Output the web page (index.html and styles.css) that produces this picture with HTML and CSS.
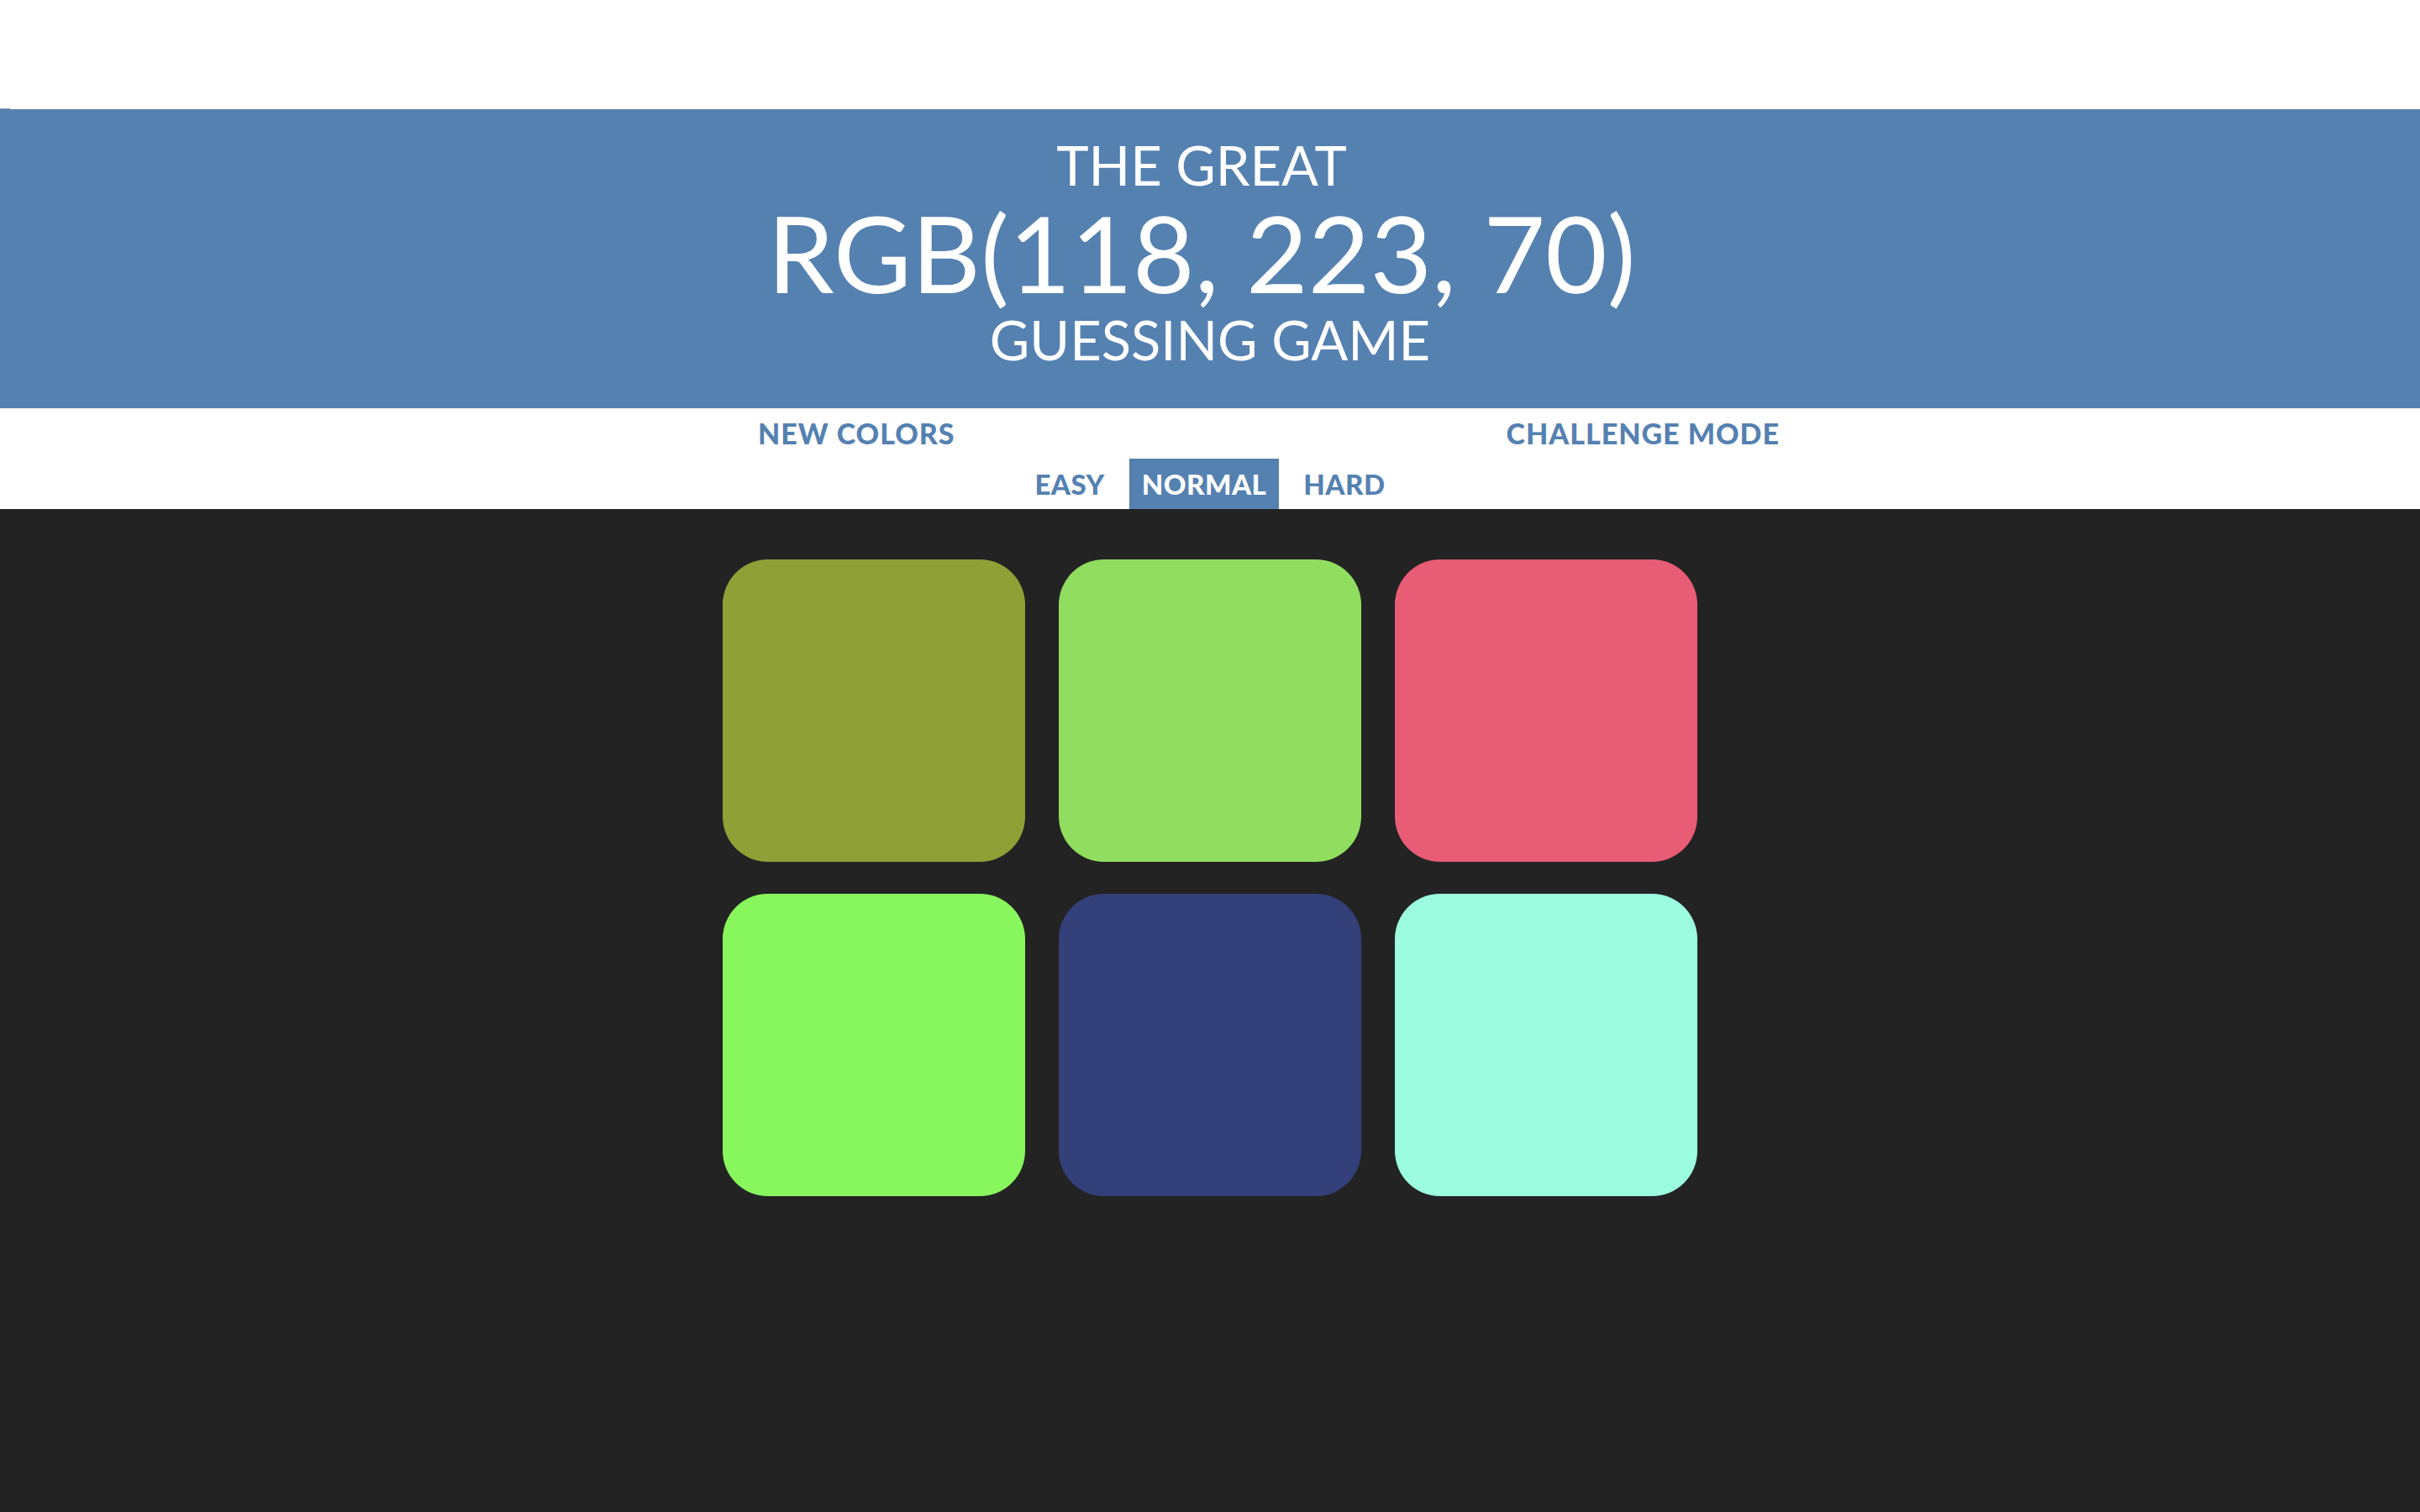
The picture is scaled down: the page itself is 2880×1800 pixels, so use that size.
FILE: index.html
```html
<!DOCTYPE html>
<html lang="en">
<head>
<meta charset="utf-8">
<title>Color Game</title>
<link rel="stylesheet" href="styles.css">
</head>
<body>
<div class="topspace"><span class="mark"></span></div>
<h1 class="header">
  <span class="line small shifted">THE GREAT</span>
  <span class="line big shifted">RGB(118, 223, 70)</span>
  <span class="line small">GUESSING GAME</span>
</h1>
<div class="stripe">
  <div class="row row-main">
    <button class="btn btn-main">NEW COLORS</button>
    <span class="message"></span>
    <button class="btn btn-main">CHALLENGE MODE</button>
  </div>
  <div class="row row-modes">
    <button class="btn">EASY</button>
    <button class="btn selected">NORMAL</button>
    <button class="btn">HARD</button>
  </div>
</div>
<div class="container">
  <div class="square sq1"></div>
  <div class="square sq2"></div>
  <div class="square sq3"></div>
  <div class="square sq4"></div>
  <div class="square sq5"></div>
  <div class="square sq6"></div>
</div>
</body>
</html>
```
FILE: styles.css
```css
html, body {
  margin: 0;
  padding: 0;
}
body {
  background: #232323;
  font-family: Lato, "Open Sans", "Liberation Sans", sans-serif;
  min-height: 1800px;
}
.topspace {
  height: 130px;
  background: #ffffff;
  display: flex;
  align-items: flex-end;
}
.mark {
  display: block;
  width: 12px;
  height: 1px;
  background: #8a9cb4;
}
.header {
  margin: 0;
  background: #5581b1;
  color: #ffffff;
  font-weight: 400;
  text-align: center;
  padding: 26px 0 42px;
}
.line {
  display: block;
}
.shifted {
  padding-right: 20px;
}
.small {
  font-size: 65px;
  line-height: 80px;
}
.big {
  font-size: 127px;
  line-height: 128px;
}
.stripe {
  background: #ffffff;
  height: 120px;
}
.row {
  display: flex;
  justify-content: center;
  height: 60px;
}
.row-main {
  padding-left: 140px;
}
.message {
  width: 626px;
}
.row-modes {
  gap: 14px;
}
.btn {
  border: none;
  background: none;
  color: #5581b1;
  font-family: Lato, "Open Sans", "Liberation Sans", sans-serif;
  font-weight: 900;
  font-size: 33px;
  letter-spacing: 0.5px;
  line-height: 60px;
  height: 60px;
  padding: 0 15px;
  margin: 0;
  cursor: pointer;
}
.btn-main {
  font-size: 34px;
  letter-spacing: 1px;
}
.btn.selected {
  background: #5581b1;
  color: #ffffff;
}
.container {
  width: 1200px;
  margin: 40px auto 0;
  padding: 20px 0;
  display: grid;
  grid-template-columns: repeat(3, 360px);
  column-gap: 40px;
  row-gap: 38px;
  justify-content: center;
}
.square {
  width: 360px;
  height: 360px;
  border-radius: 54px;
}
.sq1 { background: #8fa036; }
.sq2 { background: #91dd60; }
.sq3 { background: #e85c75; }
.sq4 { background: #88f75d; }
.sq5 { background: #334079; }
.sq6 { background: #9cfce0; }
```
